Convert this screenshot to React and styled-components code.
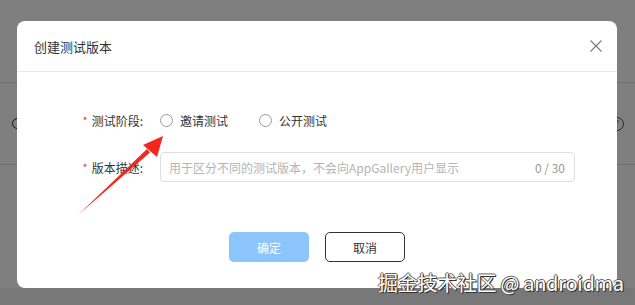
import React from 'react';
import styled, { createGlobalStyle } from 'styled-components';

const GlobalStyle = createGlobalStyle`
  html, body {
    margin: 0;
    padding: 0;
  }
  body {
    font-family: "Noto Sans CJK SC", "Noto Sans", "Liberation Sans", sans-serif;
  }
`

const Page = styled.div`
  position: relative;
  width: 635px;
  height: 305px;
  overflow: hidden;
  background: #ffffff;
`
const PageBar = styled.div`
  height: 82px;
  border-bottom: 1px solid #dddddd;
`
const PageRow = styled.div`
  height: 81px;
  display: flex;
  align-items: center;
  justify-content: space-between;
  padding: 0 11px 0 12px;
  border-bottom: 1px solid #dddddd;
`
const PageCircle = styled.span`
  width: 9px;
  height: 9px;
  border: 1.5px solid #222;
  border-radius: 50%;
`
const HelpIcon = styled.span`
  width: 12px;
  height: 12px;
  border: 1px solid #555;
  border-radius: 50%;
  font-size: 9px;
  line-height: 12px;
  text-align: center;
  color: #555;
`
const PageFooter = styled.div`
  height: 100%;
  background: #f0f0f0;
  margin-top: 123px;
`

const Overlay = styled.div`
  position: absolute;
  inset: 0;
  background: rgba(0, 0, 0, 0.5);
  padding: 21px 0 0 17px;
`
const Modal = styled.div`
  width: 600px;
  height: 267px;
  background: #ffffff;
  border-radius: 8px;
  display: flex;
  flex-direction: column;
`
const Header = styled.div`
  height: 50px;
  display: flex;
  align-items: center;
  justify-content: space-between;
  padding: 0 14px 0 17px;
  border-bottom: 1px solid #e8e8e8;
`
const Title = styled.span`
  font-size: 13px;
  color: #333333;
`
const Close = styled.svg`
  width: 14px;
  height: 14px;
`
const Body = styled.div`
  flex: 1;
  display: flex;
  flex-direction: column;
  padding-top: 33px;
  gap: 17px;
`
const Row = styled.div`
  display: flex;
  align-items: center;
  height: 30px;
`
const Label = styled.div`
  width: 126px;
  padding-right: 17px;
  display: flex;
  justify-content: flex-end;
  align-items: center;
  font-size: 12px;
  color: #333333;
`
const Star = styled.span`
  color: #f04134;
  font-size: 11px;
  margin-right: 4px;
`
const RadioGroup = styled.div`
  display: flex;
  align-items: center;
  gap: 31px;
`
const Radio = styled.label`
  display: flex;
  align-items: center;
  gap: 7px;
  font-size: 12px;
  color: #333333;
`
const Circle = styled.span`
  width: 11px;
  height: 11px;
  border: 1px solid #9a9a9a;
  border-radius: 50%;
`
const Input = styled.div`
  box-sizing: border-box;
  width: 415px;
  height: 30px;
  border: 1px solid #dedede;
  border-radius: 4px;
  display: flex;
  align-items: center;
  justify-content: space-between;
  padding: 0 9px 0 8px;
  font-size: 12px;
`
const Placeholder = styled.span`
  color: #b4b4b4;
`
const Count = styled.span`
  color: #999999;
`
const Footer = styled.div`
  display: flex;
  justify-content: center;
  gap: 16px;
  padding: 33px 0 26px;
`
const Button = styled.button`
  box-sizing: border-box;
  width: 80px;
  height: 30px;
  border-radius: 5px;
  font-family: inherit;
  font-size: 12px;
  border: ${p => (p.primary ? 'none' : '1px solid #333333')};
  background: ${p => (p.primary ? '#8cc4fc' : '#ffffff')};
  color: ${p => (p.primary ? '#ffffff' : '#333333')};
`

const Arrow = styled.svg`
  position: absolute;
  left: 0;
  top: 0;
  width: 635px;
  height: 305px;
  pointer-events: none;
`
const Watermark = styled.div`
  position: absolute;
  left: 378px;
  top: 268px;
  font-size: 20px;
  color: #ffffff;
  letter-spacing: -0.3px;
  text-shadow: 1px 1px 0 #333, -1px 0 0 #555, 0 -1px 0 #666, 1px 0 1px #444;
`

export default function App() {
  return (
    <>
      <GlobalStyle />
      <Page>
        <PageBar />
        <PageRow>
          <PageCircle />
          <HelpIcon>?</HelpIcon>
        </PageRow>
        <PageFooter />
        <Overlay>
          <Modal>
            <Header>
              <Title>创建测试版本</Title>
              <Close viewBox="0 0 14 14">
                <path d="M1.5 1.5 L12.5 12.5 M12.5 1.5 L1.5 12.5" stroke="#7a7a7a" strokeWidth="1.1" />
              </Close>
            </Header>
            <Body>
              <Row>
                <Label><Star>*</Star>测试阶段:</Label>
                <RadioGroup>
                  <Radio><Circle />邀请测试</Radio>
                  <Radio><Circle />公开测试</Radio>
                </RadioGroup>
              </Row>
              <Row>
                <Label><Star>*</Star>版本描述:</Label>
                <Input>
                  <Placeholder>用于区分不同的测试版本，不会向AppGallery用户显示</Placeholder>
                  <Count>0 / 30</Count>
                </Input>
              </Row>
            </Body>
            <Footer>
              <Button primary>确定</Button>
              <Button>取消</Button>
            </Footer>
          </Modal>
        </Overlay>
        <Arrow viewBox="0 0 635 305">
          <path d="M78 215 L147 149 L150 152.5 Z" fill="#f5261b" />
          <path d="M163 136 L143 145 L157 157 Z" fill="#f5261b" />
        </Arrow>
        <Watermark>掘金技术社区 @ androidma</Watermark>
      </Page>
    </>
  );
}
